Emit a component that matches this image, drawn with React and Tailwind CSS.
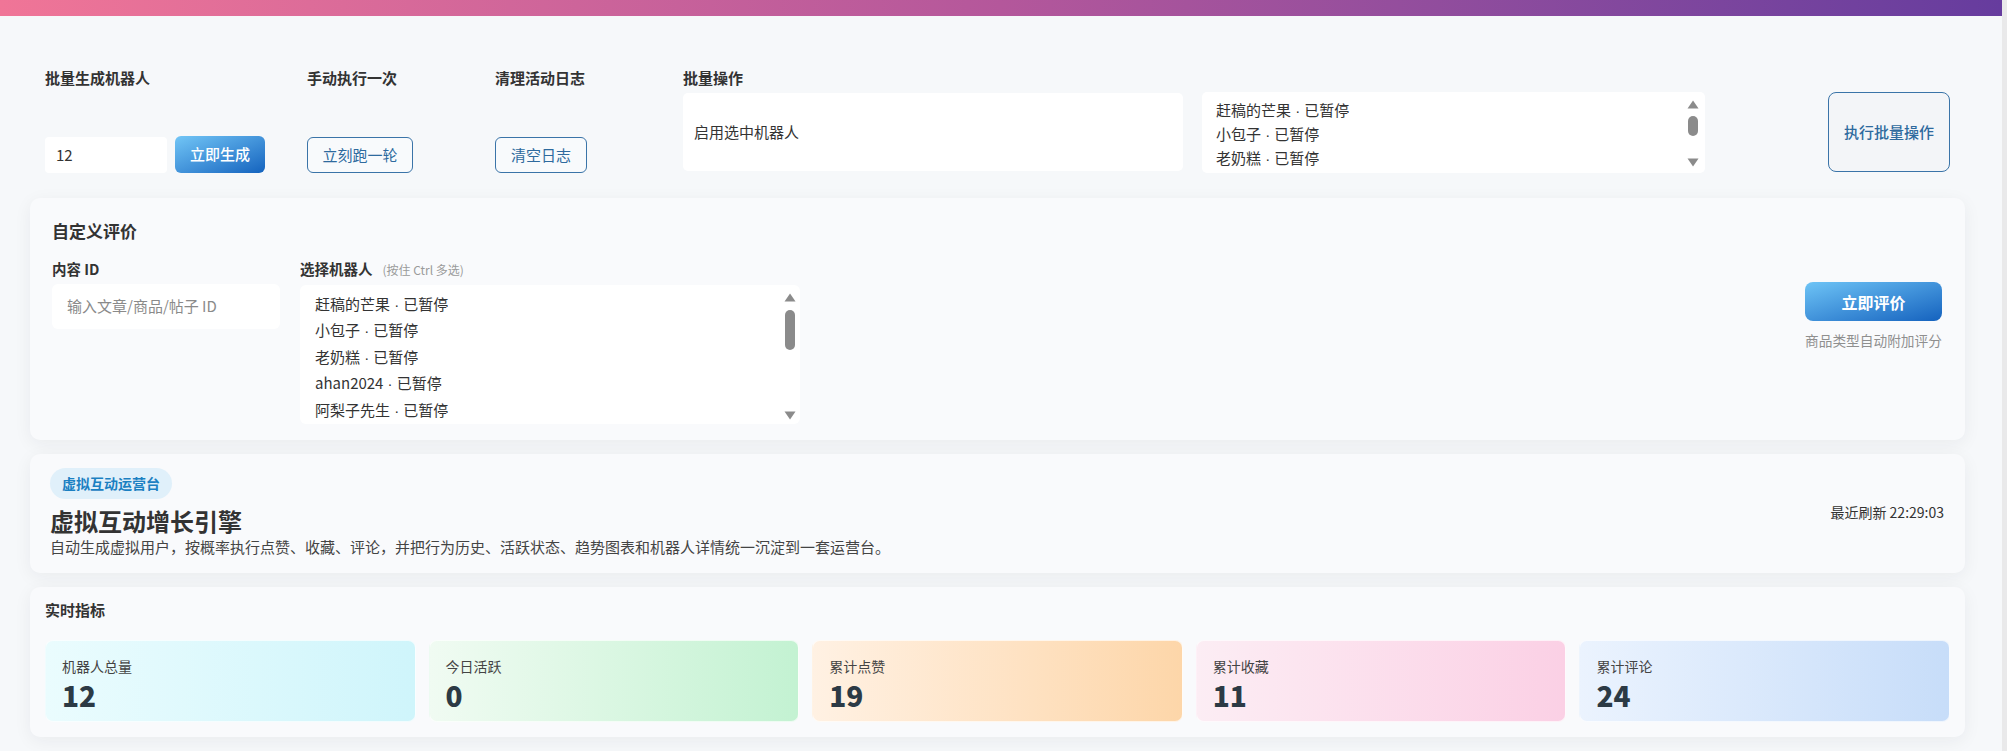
import React from "react";

function Arrow({ up }) {
  return (
    <svg width="12" height="9" viewBox="0 0 12 9" className="block">
      {up ? (
        <path d="M6 0.5 L11.5 8.5 L0.5 8.5 Z" fill="#8b8b8b" />
      ) : (
        <path d="M0.5 0.5 L11.5 0.5 L6 8.5 Z" fill="#8b8b8b" />
      )}
    </svg>
  );
}

function FakeScroll({ topPad, gap, thumbH, bottomPad, right }) {
  return (
    <div
      className="flex h-full w-[14px] shrink-0 flex-col items-center"
      style={{ paddingTop: topPad, paddingBottom: bottomPad, marginRight: right }}
    >
      <Arrow up />
      <div className="w-[10px] rounded-full bg-[#8b8b8b]" style={{ marginTop: gap, height: thumbH }} />
      <div className="flex-1" />
      <Arrow />
    </div>
  );
}

const robots = [
  ["赶稿的芒果", "已暂停"],
  ["小包子", "已暂停"],
  ["老奶糕", "已暂停"],
  ["ahan2024", "已暂停"],
  ["阿梨子先生", "已暂停"],
];

function Robot({ r }) {
  return (
    <>
      {r[0]}
      <span className="font-['Liberation_Sans',sans-serif]"> · </span>
      {r[1]}
    </>
  );
}

const metrics = [
  { label: "机器人总量", value: "12", cls: "from-[#eafcfe] to-[#cff5fb]" },
  { label: "今日活跃", value: "0", cls: "from-[#f0fbf2] to-[#c3f2d2]" },
  { label: "累计点赞", value: "19", cls: "from-[#fff1e3] to-[#fdd6a9]" },
  { label: "累计收藏", value: "11", cls: "from-[#fcedf4] to-[#fbd0e5]" },
  { label: "累计评论", value: "24", cls: "from-[#ebf3fe] to-[#c7ddf9]" },
];

export default function App() {
  return (
    <div className="flex min-h-[751px] w-[2007px] bg-[#f6f8fa] font-['Noto_Sans_CJK_SC','Noto_Sans',sans-serif] text-[#333]">
      <div className="flex-1">
        <div className="h-[16px] bg-linear-to-r from-[#f07597] via-[#b4579b] to-[#663c9e]" />

        {/* toolbar */}
        <div className="flex pl-[45px] pr-[52px] pt-[52px] pb-[25px]">
          <div className="flex h-[105px] w-[220px] flex-col justify-between">
            <div className="text-[15px] font-bold leading-[20px] text-[#333]">批量生成机器人</div>
            <div className="flex items-end gap-[8px]">
              <div className="flex h-[36px] w-[122px] items-center rounded-[4px] bg-white pl-[11px] text-[15px] text-[#333]">12</div>
              <button className="flex h-[37px] w-[90px] items-center justify-center rounded-[6px] bg-linear-to-br from-[#72c6f6] to-[#1363be] text-[15px] font-medium text-white">
                立即生成
              </button>
            </div>
          </div>
          <div className="ml-[42px] flex h-[105px] w-[146px] flex-col justify-between">
            <div className="text-[15px] font-bold leading-[20px]">手动执行一次</div>
            <button className="flex h-[36px] w-[106px] items-center justify-center rounded-[6px] border border-[#3a74a8] bg-[#f8fafc] text-[15px] text-[#2e6a9e]">
              立刻跑一轮
            </button>
          </div>
          <div className="ml-[42px] flex h-[105px] w-[146px] flex-col justify-between">
            <div className="text-[15px] font-bold leading-[20px]">清理活动日志</div>
            <button className="flex h-[36px] w-[92px] items-center justify-center rounded-[6px] border border-[#3a74a8] bg-[#f8fafc] text-[15px] text-[#2e6a9e]">
              清空日志
            </button>
          </div>
          <div className="ml-[42px] flex flex-1 flex-col">
            <div className="text-[15px] font-bold leading-[20px]">批量操作</div>
            <div className="mt-[4px] flex items-start">
              <div className="mt-[1px] flex h-[78px] w-[500px] items-center rounded-[5px] bg-white pl-[11px] text-[15px] text-[#333]">
                启用选中机器人
              </div>
              <div className="ml-[19px] flex h-[81px] w-[503px] overflow-hidden rounded-[5px] bg-white">
                <div className="h-[81px] flex-1 overflow-hidden pl-[14px] pt-[6px]">
                  {robots.slice(0, 4).map((r) => (
                    <div key={r[0]} className="whitespace-nowrap text-[15px] leading-[23px] text-[#333]">
                      <Robot r={r} />
                    </div>
                  ))}
                </div>
                <FakeScroll topPad={8} gap={7} thumbH={20} bottomPad={6} right={5} />
              </div>
              <button className="ml-auto flex h-[80px] w-[122px] items-center justify-center rounded-[8px] border border-[#3a74a8] bg-[#f3f5f8] text-[15px] font-medium text-[#2e6a9e]">
                执行批量操作
              </button>
            </div>
          </div>
        </div>

        <div className="flex flex-col gap-[14px] pl-[30px] pr-[37px]">
          {/* custom review */}
          <div className="rounded-[10px] bg-[#f9fafc] pl-[22px] pr-[23px] pt-[21px] pb-[16px] shadow-[0_4px_18px_rgba(30,41,59,0.06)]">
            <div className="text-[17px] font-bold leading-[24px] text-[#333]">自定义评价</div>
            <div className="mt-[16px] flex">
              <div className="w-[228px]">
                <div className="text-[14.5px] font-bold leading-[20px] text-[#333]">内容 ID</div>
                <div className="mt-[5px] flex h-[45px] items-center rounded-[6px] bg-white pl-[15px] text-[15px] text-[#8a8a8a]">
                  输入文章/商品/帖子 ID
                </div>
              </div>
              <div className="ml-[20px] w-[500px]">
                <div className="flex items-baseline text-[14.5px] font-bold leading-[20px] text-[#333]">
                  选择机器人
                  <span className="ml-[10px] text-[12px] font-normal text-[#9a9a9a]">(按住 Ctrl 多选)</span>
                </div>
                <div className="mt-[5px] flex h-[139px] overflow-hidden rounded-[6px] bg-white">
                  <div className="flex-1 overflow-hidden pl-[15px] pt-[6px]">
                    {robots.map((r) => (
                      <div key={r[0]} className="whitespace-nowrap text-[15px] leading-[25.4px] text-[#333]">
                        <Robot r={r} />
                      </div>
                    ))}
                  </div>
                  <FakeScroll topPad={8} gap={8} thumbH={40} bottomPad={4} right={3} />
                </div>
              </div>
              <div className="ml-auto flex flex-col items-stretch">
                <div className="h-[23px]" />
                <button className="flex h-[39px] w-[137px] items-center justify-center rounded-[8px] bg-linear-to-br from-[#6ec4f6] to-[#1462be] text-[16px] font-bold text-white">
                  立即评价
                </button>
                <div className="mt-[9px] text-center text-[13.7px] leading-[20px] text-[#8f8f8f]">商品类型自动附加评分</div>
              </div>
            </div>
          </div>

          {/* hero */}
          <div className="flex items-center justify-between rounded-[10px] bg-[#f9fafc] pl-[20px] pr-[21px] pt-[14px] pb-[16px] shadow-[0_4px_18px_rgba(30,41,59,0.06)]">
            <div>
              <div className="inline-flex h-[31px] items-center rounded-full bg-[#e0f0fa] px-[12px] text-[14px] font-bold text-[#1b80c2]">
                虚拟互动运营台
              </div>
              <div className="mt-[7px] text-[24px] font-bold leading-[30px] text-[#333]">虚拟互动增长引擎</div>
              <div className="text-[15px] leading-[21px] text-[#444]">
                自动生成虚拟用户，按概率执行点赞、收藏、评论，并把行为历史、活跃状态、趋势图表和机器人详情统一沉淀到一套运营台。
              </div>
            </div>
            <div className="text-[14px] text-[#333]">最近刷新 22:29:03</div>
          </div>

          {/* metrics */}
          <div className="rounded-[10px] bg-[#f9fafc] px-[15px] pt-[13px] pb-[15px] shadow-[0_4px_18px_rgba(30,41,59,0.06)]">
            <div className="text-[15px] font-bold leading-[20px] text-[#333]">实时指标</div>
            <div className="mt-[20px] grid grid-cols-5 gap-[13px]">
              {metrics.map((m) => (
                <div
                  key={m.label}
                  className={`h-[82px] rounded-[8px] border border-white/70 bg-linear-to-r px-[16px] pt-[15px] ${m.cls}`}
                >
                  <div className="text-[14px] leading-[20px] text-[#444]">{m.label}</div>
                  <div className="mt-[2px] text-[28px] font-extrabold leading-[34px] text-[#2c3a45]">{m.value}</div>
                </div>
              ))}
            </div>
          </div>
          <div className="h-[12px]" />
        </div>
      </div>
      <div className="w-[5px] bg-[#e9e9ea]" />
    </div>
  );
}
